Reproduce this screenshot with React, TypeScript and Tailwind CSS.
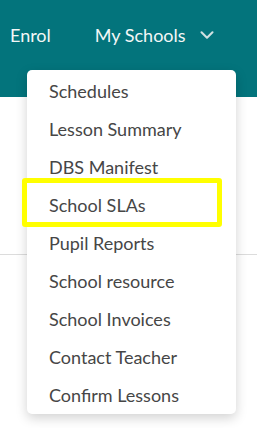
import { ChevronDown } from "lucide-react";

const items = [
  "Schedules",
  "Lesson Summary",
  "DBS Manifest",
  "School SLAs",
  "Pupil Reports",
  "School resource",
  "School Invoices",
  "Contact Teacher",
  "Confirm Lessons",
];

export default function App() {
  return (
    <div className="relative h-[428px] w-[257px] overflow-hidden bg-white font-['Lato',sans-serif]">
      <header className="flex h-[97px] items-start bg-[#03747c] pt-[22px] text-[18px] text-[#f3f7f7]">
        <span className="ml-[10px]">Enrol</span>
        <span className="ml-[44px]">My Schools</span>
        <ChevronDown className="ml-[10px] mt-[2px] h-[22px] w-[22px] text-[#cfe0e1]" strokeWidth={2.3} />
      </header>
      <div className="mt-[157px] border-t border-[#dcdcdc]" />

      <div className="absolute left-[27px] top-[70px] w-[209px] rounded-[5px] bg-white pt-[2px] shadow-[0_4px_12px_rgba(0,0,0,0.18)]">
        <ul>
          {items.map((item) => (
            <li key={item} className="flex h-[38px] items-center pl-[22px] text-[18px] text-[#464646]">
              {item}
            </li>
          ))}
        </ul>
        <div className="absolute left-[-5px] top-[108px] h-[49px] w-[200px] rounded-[3px] border-[5px] border-[#ffff00]" />
      </div>
    </div>
  );
}
